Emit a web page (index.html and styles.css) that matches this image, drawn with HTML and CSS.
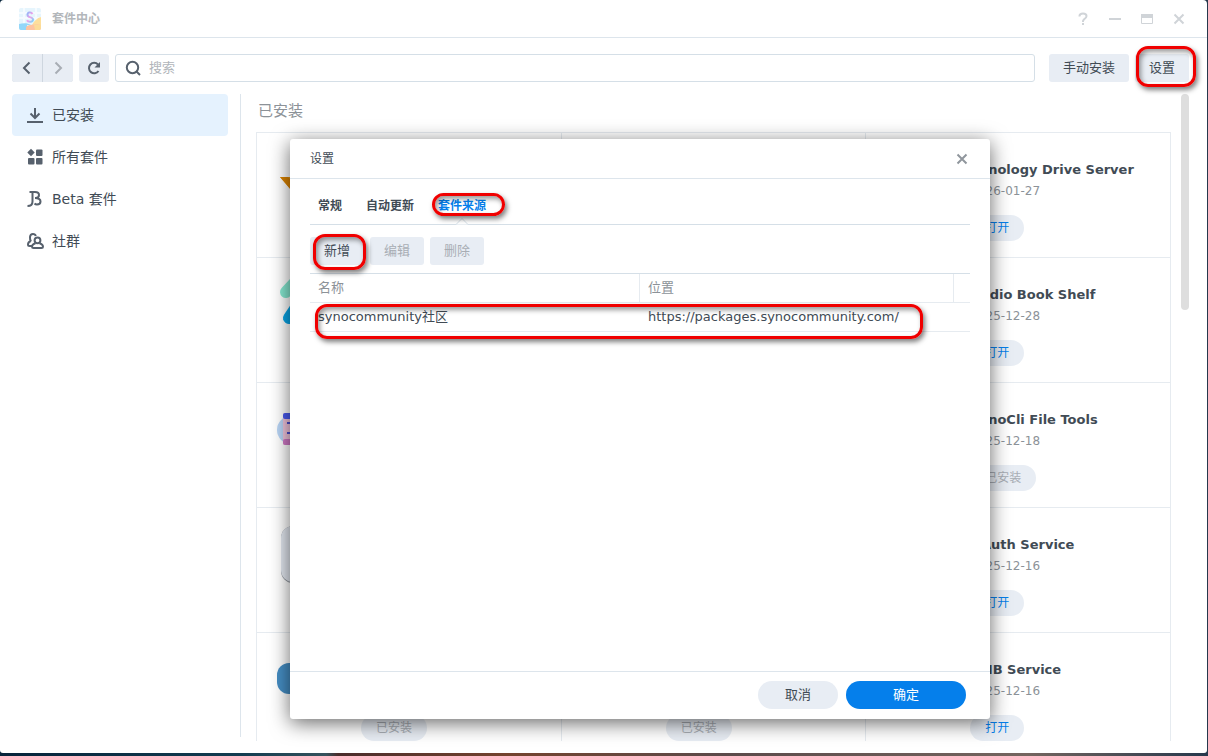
FILE: index.html
```html
<!DOCTYPE html>
<html lang="zh-CN">
<head>
    <meta charset="UTF-8">
    <meta name="viewport" content="width=device-width, initial-scale=1.0">
    <title>套件中心</title>
    <link rel="stylesheet" href="styles.css">
</head>
<body>
    <div class="window">
        <header class="titlebar">
            <svg class="app-logo" width="24" height="24" viewBox="0 0 24 24">
                <rect x="1" y="1" width="22" height="22" rx="2" fill="#e6f5fd"/>
                <path d="M1 6h22M1 11h22M6 1v16M18 1v12" stroke="#f5fbff"/>
                <path d="M23 10c-4 1-7 4-9 8h9z" fill="#fddf9c"/>
                <path d="M1 17c5-1.500 9-1 12 1h-4v5H3q-2 0-2-2z" fill="#93d7f9"/>
                <path d="M8 20c3-2.500 8-3 15-2v3q0 2-2 2H8z" fill="#fdc4a2"/>
                <path d="M16 18h7v3q0 2-2 2h-4z" fill="#fcdc98"/>
                <path d="M14.500 7c-1-2-5-2-5 .8 0 3.400 5.500 1.800 5.500 4.600 0 3-5 2.800-6 .8" fill="none" stroke="url(#s)" stroke-width="2"/>
                <defs><linearGradient id="s" x1="0" y1="0" x2="1" y2="1"><stop stop-color="#8bb8fa"/><stop offset=".5" stop-color="#f0a0e8"/><stop offset="1" stop-color="#7fd4f8"/></linearGradient></defs>
            </svg>
            <span class="app-name">套件中心</span>
            <div class="window-controls">
                <button aria-label="帮助"><svg width="16" height="16" viewBox="0 0 16 16"><path d="M4.500 5.500V5q0-2.500 3.500-2.500T11.500 5Q11.500 6.500 10 7.500T8 10v1M8 12v2"/></svg></button>
                <button aria-label="最小化"><svg width="16" height="16" viewBox="0 0 16 16"><path d="M2 8h12"/></svg></button>
                <button aria-label="最大化"><svg width="16" height="16" viewBox="0 0 16 16"><path class="thin" d="M2.500 3.500h11v9h-11z"/><path d="M2 5h12" stroke-width="4"/></svg></button>
                <button aria-label="关闭"><svg width="16" height="16" viewBox="0 0 16 16"><path d="M3.500 3.500l9 9M12.500 3.500l-9 9"/></svg></button>
            </div>
        </header>

        <div class="toolbar">
            <div class="nav-group">
                <button class="btn btn-icon" aria-label="后退"><svg width="16" height="16" viewBox="0 0 16 16"><path d="M10.500 2.500L5 8l5.500 5.500"/></svg></button>
                <button class="btn btn-icon" aria-label="前进" disabled><svg width="16" height="16" viewBox="0 0 16 16"><path d="M5.500 2.500L11 8l-5.500 5.500"/></svg></button>
            </div>
            <button class="btn btn-icon" aria-label="刷新"><svg width="16" height="16" viewBox="0 0 16 16"><path d="M12.500 11A5.200 5.200 0 1 1 12 4.500"/><path class="solid" d="M14 2v5.500H8.500z"/></svg></button>
            <label class="search">
                <svg width="16" height="16" viewBox="0 0 16 16"><circle cx="7.500" cy="7.500" r="5.700"/><path d="M11.500 11.500l3.500 3.500"/></svg>
                <input type="text" placeholder="搜索" aria-label="搜索">
            </label>
            <button class="btn btn-manual">手动安装</button>
            <button class="btn mark mark-settings">设置</button>
        </div>

        <div class="body">
            <nav class="sidebar">
                <a href="#" class="active">
                    <svg width="18" height="18" viewBox="0 0 18 18"><path d="M9 2v9M4.500 7.500L9 12l4.500-4.500M1 16h16"/></svg>
                    已安装
                </a>
                <a href="#">
                    <svg width="18" height="18" viewBox="0 0 18 18"><path class="solid" d="M5 .8L8.700 4.500 5 8.200 1.300 4.500z"/><g class="solid"><rect x="10" y="1.500" width="6.500" height="6.500" rx="1"/><rect x="2" y="10" width="6.500" height="6.500" rx="1"/><rect x="10" y="10" width="6.500" height="6.500" rx="1"/></g></svg>
                    所有套件
                </a>
                <a href="#">
                    <svg width="18" height="18" viewBox="0 0 18 18"><path d="M3.500 2H9q4 0 4 3T9.500 8M9 8q5.500 0 5.500 3.500 0 3-3.500 3-1.500 0-2.500-1M6.500 2v9.500q0 4.500-5 4.500"/></svg>
                    Beta 套件
                </a>
                <a href="#">
                    <svg width="18" height="18" viewBox="0 0 18 18"><path d="M6 14H3.500Q2 14 2 12.500q0-2.500 2.800-3.500M5 9.500Q3.800 8 4 5q.3-3 3-3 2.200 0 2.800 2"/><circle cx="11.500" cy="8.300" r="2.900"/><path d="M9.500 11.200Q6 12 6 14.800 6 16 7.500 16h8q1.500 0 1.500-1.200 0-2.800-3.500-3.600"/></svg>
                    社群
                </a>
            </nav>

            <main class="content">
                <h1>已安装</h1>
                <div class="packages">
                    <article class="package">
                        <svg class="package-icon" viewBox="0 0 64 64"><path d="M3 20h58L32 54z" fill="#f09a10"/><path d="M3 20l29 34 3-8-24-26z" fill="#d98200"/></svg>
                    </article>
                    <article class="package"></article>
                    <article class="package">
                        <div class="package-info"><h2>Synology Drive Server</h2><p>2026-01-27</p><button class="pill">打开</button></div>
                    </article>

                    <article class="package">
                        <svg class="package-icon" viewBox="0 0 64 64"><path d="M9 10L22-4" stroke="#86e8d0" stroke-width="12" stroke-linecap="round"/><path d="M12 36L24 18" stroke="#08a6e8" stroke-width="12" stroke-linecap="round"/></svg>
                    </article>
                    <article class="package"></article>
                    <article class="package">
                        <div class="package-info"><h2>Audio Book Shelf</h2><p>2025-12-28</p><button class="pill">打开</button></div>
                    </article>

                    <article class="package">
                        <svg class="package-icon" viewBox="0 0 64 64"><circle cx="14" cy="23" r="14" fill="#b8d4f5"/><rect x="6" y="6" width="48" height="32" rx="2" fill="#f1c5dc"/><rect x="6" y="6" width="48" height="6" rx="2" fill="#4a5af0"/><rect x="6" y="32" width="48" height="6" rx="2" fill="#cf78c5"/><path d="M10 16h8M10 26h8" stroke="#4a4ed0" stroke-width="2"/><path d="M10 20h8M10 29h8" stroke="#8c79d7"/></svg>
                    </article>
                    <article class="package"></article>
                    <article class="package">
                        <div class="package-info"><h2>SynoCli File Tools</h2><p>2025-12-18</p><button class="pill" disabled>已安装</button></div>
                    </article>

                    <article class="package">
                        <svg class="package-icon" viewBox="0 0 64 64"><rect x="4" y="-6" width="58" height="57" rx="12" fill="#8c929a"/><rect x="4" y="-6" width="58" height="56" rx="12" fill="#e2e7ef"/></svg>
                    </article>
                    <article class="package"></article>
                    <article class="package">
                        <div class="package-info"><h2>OAuth Service</h2><p>2025-12-16</p><button class="pill">打开</button></div>
                    </article>

                    <article class="package">
                        <svg class="package-icon" viewBox="0 0 64 64"><rect x="0" y="6" width="60" height="31" rx="12" fill="#458dc3"/></svg>
                        <div class="package-info"><button class="pill" disabled>已安装</button></div>
                    </article>
                    <article class="package">
                        <div class="package-info"><button class="pill" disabled>已安装</button></div>
                    </article>
                    <article class="package">
                        <div class="package-info"><h2>SMB Service</h2><p>2025-12-16</p><button class="pill">打开</button></div>
                    </article>
                </div>
            </main>
            <div class="scrollbar"></div>
        </div>

        <section class="dialog" role="dialog" aria-labelledby="dialogTitle">
            <header class="dialog-header">
                <h2 id="dialogTitle">设置</h2>
                <button aria-label="关闭"><svg width="16" height="16" viewBox="0 0 16 16"><path d="M3.500 3.500l9 9M12.500 3.500l-9 9"/></svg></button>
            </header>
            <div class="dialog-body">
                <div class="tabs" role="tablist">
                    <button role="tab">常规</button>
                    <button role="tab">自动更新</button>
                    <button role="tab" class="active mark mark-tab" aria-selected="true">套件来源<svg class="notch" width="14" height="8" viewBox="0 0 14 8"><path d="M1 7.500l6-6 6 6"/></svg></button>
                </div>
                <div class="actions">
                    <button class="btn mark mark-add">新增</button>
                    <button class="btn" disabled>编辑</button>
                    <button class="btn" disabled>删除</button>
                </div>
                <table class="sources">
                    <thead>
                        <tr>
                            <th class="col-name">名称</th>
                            <th>位置</th>
                            <th class="col-end"></th>
                        </tr>
                    </thead>
                    <tbody>
                        <tr class="mark-row">
                            <td>synocommunity社区</td>
                            <td>https://packages.synocommunity.com/</td>
                            <td></td>
                        </tr>
                    </tbody>
                </table>
            </div>
            <footer class="dialog-footer">
                <button class="cancel">取消</button>
                <button class="confirm">确定</button>
            </footer>
        </section>
    </div>
</body>
</html>
```
FILE: styles.css
```css
* {
    box-sizing: border-box;
}

body {
    margin: 0;
    height: 100vh;
    padding: 0 1px 3px 0;
    overflow: hidden;
    font-family: "DejaVu Sans", "Noto Sans CJK SC", sans-serif;
    font-size: 13px;
    line-height: 20px;
    color: #414b55;
    background: linear-gradient(90deg, #06233a, #123c50 20%, #35525c 27%, #4a2c2b 28%, #74432e 42%, #5b4a4a 60%, #74655f 85%, #26384c);
}

button,
input {
    font: inherit;
    color: inherit;
    border: 0;
    padding: 0;
    background: none;
}

h1,
h2,
p {
    margin: 0;
}

svg {
    display: block;
    flex: none;
    fill: none;
    stroke: #57616d;
    stroke-width: 2;
}

.solid {
    fill: #57616d;
    stroke: none;
}

.thin {
    stroke-width: 1;
}

.window {
    position: relative;
    display: flex;
    flex-direction: column;
    height: 100%;
    background: #fff;
    border-radius: 4px 4px 3px 3px;
}

/* Title bar */
.titlebar {
    display: flex;
    align-items: center;
    height: 38px;
    padding: 0 20px 0 18px;
    border-bottom: 1px solid #dde5ec;
}

.app-logo {
    stroke: none;
}

.app-name {
    margin-left: 10px;
    font-size: 12px;
    font-weight: bold;
    color: #b3b7bb;
}

.window-controls {
    display: flex;
    gap: 16px;
    margin-left: auto;
}

.window-controls svg {
    stroke: #d0d4d8;
}

/* Toolbar */
.toolbar {
    display: flex;
    gap: 6px;
    padding: 16px 18px 12px 12px;
}

.btn {
    min-width: 54px;
    height: 28px;
    border-radius: 3px;
    background: #e8edf4;
}

.btn-icon {
    display: flex;
    align-items: center;
    justify-content: center;
    min-width: 30px;
}

.btn:disabled {
    color: #a8adb4;
}

.btn:disabled svg {
    stroke: #a8adb4;
}

.btn-manual {
    min-width: 80px;
    margin-left: 8px;
}

.nav-group {
    display: flex;
    gap: 1px;
    border-radius: 3px;
    background: #ced6df;
}

.nav-group .btn:first-child {
    border-radius: 3px 0 0 3px;
}

.nav-group .btn:last-child {
    border-radius: 0 3px 3px 0;
}

.search {
    display: flex;
    flex: 1;
    align-items: center;
    gap: 8px;
    height: 28px;
    padding: 0 9px;
    border: 1px solid #d5dfe7;
    border-radius: 3px;
}

.search input {
    flex: 1;
    outline: 0;
}

.search input::placeholder {
    color: #b1b5ba;
}

/* Sidebar */
.body {
    display: flex;
    flex: 1;
    min-height: 0;
}

.sidebar {
    width: 241px;
    margin-bottom: 16px;
    padding: 0 12px;
    border-right: 1px solid #dde5ec;
}

.sidebar a {
    display: flex;
    align-items: center;
    gap: 8px;
    height: 42px;
    padding-left: 14px;
    border-radius: 4px;
    font-size: 14px;
    color: #414b55;
    text-decoration: none;
}

.sidebar .active {
    background: #e5f2fe;
}

/* Package list */
.content {
    flex: 1;
    margin: 0 10px 12px 15px;
    overflow: hidden;
}

.content h1 {
    height: 38px;
    padding-left: 2px;
    font-size: 15px;
    font-weight: normal;
    line-height: 34px;
    color: #8c9298;
}

.packages {
    display: grid;
    grid-template-columns: repeat(3, 1fr);
    border-top: 1px solid #e6ebf0;
    border-left: 1px solid #e6ebf0;
}

.package {
    display: grid;
    grid-template-columns: 64px 1fr;
    gap: 20px;
    height: 125px;
    padding: 24px 0 16px 20px;
    border-right: 1px solid #e6ebf0;
    border-bottom: 1px solid #e6ebf0;
}

.package-icon {
    width: 64px;
    height: 64px;
    overflow: visible;
    stroke-width: 0;
}

.package-info {
    grid-column: 2;
    display: flex;
    flex-direction: column;
    align-items: flex-start;
}

.package-info h2 {
    margin-top: 3px;
    font-size: 13px;
    line-height: 20px;
}

.package-info p {
    font-size: 12px;
    line-height: 22px;
    color: #8c9298;
}

.pill {
    height: 26px;
    margin-top: auto;
    padding: 0 15px;
    border-radius: 13px;
    font-size: 12px;
    color: #057feb;
    background: #e8edf4;
}

.pill:disabled {
    color: #a8adb4;
}

.scrollbar {
    width: 8px;
    height: 216px;
    margin-right: 18px;
    border-radius: 4px;
    background: #dedede;
}

/* Settings dialog */
.dialog {
    position: absolute;
    top: 139px;
    right: 217px;
    bottom: 34px;
    left: 290px;
    display: flex;
    flex-direction: column;
    border-radius: 3px;
    background: #fff;
    box-shadow: 0 4px 20px rgba(0, 0, 0, 0.6);
}

.dialog-header {
    display: flex;
    align-items: center;
    justify-content: space-between;
    height: 40px;
    padding: 0 20px;
    border-bottom: 1px solid #dde5ec;
}

.dialog-header h2 {
    font-size: 12px;
    font-weight: normal;
}

.dialog-header svg {
    stroke: #90969d;
}

.dialog-body {
    flex: 1;
    padding: 12px 20px;
}

.tabs {
    display: flex;
    gap: 24px;
    height: 34px;
    padding: 0 8px;
    border-bottom: 1px solid #d5dfe7;
    font-size: 12px;
    font-weight: bold;
}

.tabs button {
    padding-bottom: 4px;
}

.tabs .active {
    color: #057feb;
}

.notch {
    position: absolute;
    bottom: -1px;
    left: 17px;
    fill: #fff;
    stroke: #d5dfe7;
    stroke-width: 1;
}

.actions {
    display: flex;
    gap: 6px;
    padding: 12px 0 8px;
}

.sources {
    width: 100%;
    table-layout: fixed;
    border-collapse: separate;
    border-spacing: 0;
    border-top: 1px solid #d5dfe7;
}

.sources th,
.sources td {
    height: 29px;
    padding: 0 8px;
    border-bottom: 1px solid #e6ebf0;
    font-weight: normal;
    text-align: left;
}

.sources th {
    border-right: 1px solid #e6ebf0;
    color: #8c9298;
}

.sources .col-name {
    width: 50%;
}

.sources .col-end {
    width: 16px;
    border-right: 0;
}

.dialog-footer {
    display: flex;
    gap: 8px;
    justify-content: flex-end;
    padding: 9px 24px 10px;
    border-top: 1px solid #dde5ec;
}

.dialog-footer button {
    height: 28px;
    border-radius: 14px;
}

.dialog-footer .cancel {
    width: 80px;
    background: #e8edf4;
}

.dialog-footer .confirm {
    width: 120px;
    color: #fff;
    background: #057feb;
}

/* Red highlight frames */
.mark,
.mark-row {
    position: relative;
}

.mark::after,
.mark-row td:first-child::after {
    content: "";
    position: absolute;
    border: 3px solid #f00000;
    border-radius: 12px;
    box-shadow: 2px 3px 5px rgba(0, 0, 0, 0.5), inset 2px 3px 5px rgba(0, 0, 0, 0.4);
    pointer-events: none;
}

.mark-settings::after {
    inset: -8px -7px -5px 1px;
}

.mark-tab::after {
    inset: 2px -19px 8px -6px;
}

.mark-add::after {
    inset: -3px -2px -5px 3px;
}

.mark-row td:first-child::after {
    inset: 1px 47px -7px 5px;
}
```
